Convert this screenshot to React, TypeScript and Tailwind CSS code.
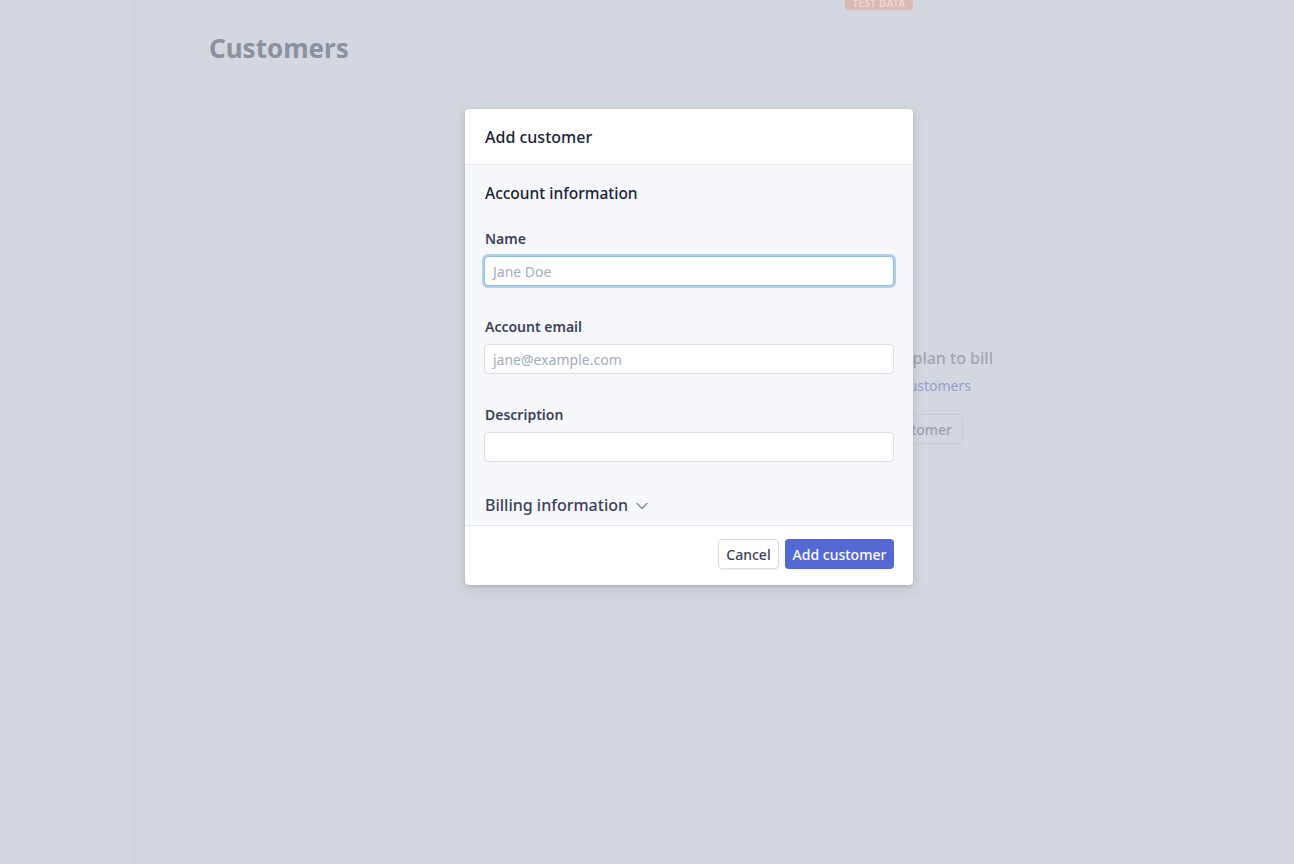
import React from "react";

export default function App() {
  return (
    <div
      className="relative flex h-[864px] w-[1294px] overflow-hidden bg-[#d3d7df]"
      style={{ fontFamily: '"Noto Sans", "Open Sans", sans-serif' }}
    >
      {/* sidebar */}
      <div className="h-full w-[135px] shrink-0 border-r border-[#cbd0d8] bg-[#d3d7df]" />

      {/* main */}
      <div className="flex flex-1 flex-col">
        <div className="flex h-[10px] justify-end pr-[381px]">
          <div className="-mt-[5px] flex h-[15px] w-[68px] items-center justify-center rounded-[3px] bg-[#dbbab2] pt-px text-[10px] font-bold leading-none tracking-wide text-[#ecd5cf]">
            TEST DATA
          </div>
        </div>
        <h1 className="mt-[19px] pl-[74px] text-[26px] font-bold leading-[38px] text-[#8b929e]">
          Customers
        </h1>
        <div className="mt-[279px] flex flex-col items-end pr-[301px]">
          <div className="text-[16px] font-medium leading-[24px] text-[#a0a6b1]">
            Create a customer and a plan to bill
          </div>
          <div className="mr-[22px] mt-[6px] text-[14px] leading-[20px] text-[#95a0cc]">
            Learn more about customers
          </div>
          <div className="mr-[30px] mt-[18px] flex h-[30px] items-center rounded-[4px] border border-[#c9ced6] px-[10px] text-[14px] font-medium text-[#9ca2ad]">
            Add customer
          </div>
        </div>
      </div>

      {/* modal */}
      <div className="absolute left-[465px] top-[109px] flex h-[476px] w-[448px] flex-col overflow-hidden rounded-[4px] bg-white shadow-[0_4px_12px_rgba(60,66,87,0.15),0_1px_3px_rgba(0,0,0,0.12)]">
        <div className="flex h-[56px] shrink-0 items-center border-b border-[#e3e8ee] px-5">
          <span className="text-[16px] font-medium text-[#1a1f36]">Add customer</span>
        </div>
        <div className="flex flex-1 flex-col overflow-hidden bg-[#f6f8fb] pl-[19px] pr-[19px] pt-4">
          <div className="pl-px text-[15.5px] font-medium leading-[24px] text-[#1a1f36]">
            Account information
          </div>
          <Field label="Name" placeholder="Jane Doe" focused className="mt-6" />
          <Field label="Account email" placeholder="jane@example.com" className="mt-[31px]" />
          <Field label="Description" placeholder="" className="mt-[31px]" />
          <div className="mt-[31px] flex items-center gap-[8px] pl-px text-[16px] font-medium leading-[24px] text-[#3c4257]">
            Billing information
            <svg width="12" height="8" viewBox="0 0 12 8" fill="none" className="mt-[2px]">
              <path d="M1 1.5l5 5 5-5" stroke="#8792a2" strokeWidth="1.5" strokeLinecap="round" strokeLinejoin="round" />
            </svg>
          </div>
        </div>
        <div className="flex h-[60px] shrink-0 items-start justify-end gap-[6px] border-t border-[#e3e8ee] pl-5 pr-[19px] pt-[13px]">
          <button className="h-[30px] w-[61px] rounded-[4px] border border-[#d5dbe1] bg-white text-[14px] font-medium text-[#3c4257] shadow-[0_1px_1px_rgba(0,0,0,0.06)]">
            Cancel
          </button>
          <button className="h-[30px] w-[109px] rounded-[4px] bg-[#5469d4] text-[14px] font-medium text-white">
            Add customer
          </button>
        </div>
      </div>
    </div>
  );
}

function Field({
  label,
  placeholder,
  focused,
  className,
}: {
  label: string;
  placeholder: string;
  focused?: boolean;
  className?: string;
}) {
  return (
    <div className={"flex flex-col " + (className ?? "")}>
      <label className="pl-px text-[14px] font-semibold leading-[20px] text-[#3c4257]">{label}</label>
      <div
        className={
          "mt-[7px] flex h-[30px] items-center rounded-[4px] border bg-white px-[8px] text-[14px] text-[#a3acb9] " +
          (focused
            ? "border-[#8ebde6] shadow-[0_0_0_2px_rgba(122,176,226,0.55)]"
            : "border-[#d9dee5]")
        }
      >
        {placeholder}
      </div>
    </div>
  );
}
